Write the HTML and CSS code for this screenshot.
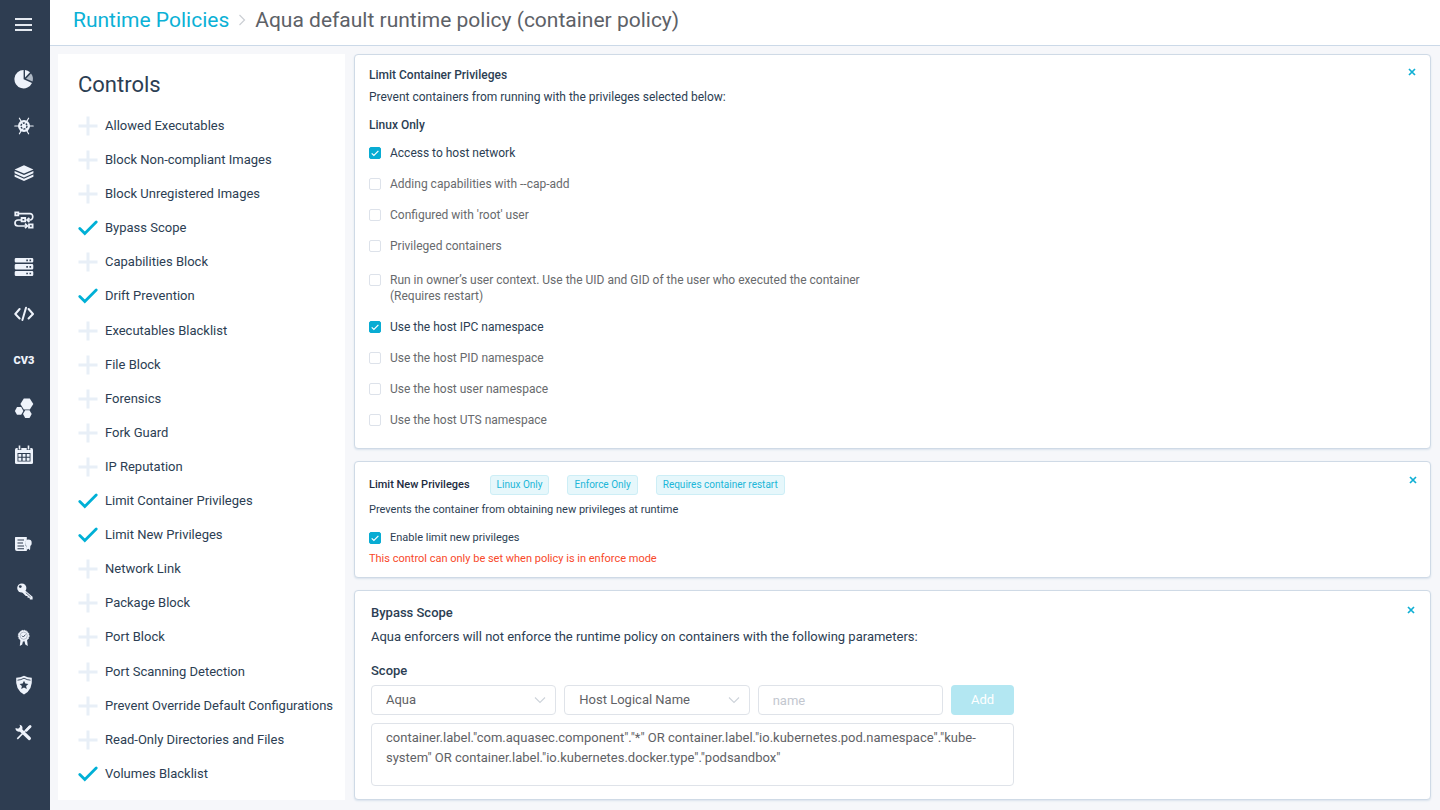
FILE: index.html
```html
<!DOCTYPE html>
<html lang="en">
<head>
<meta charset="utf-8">
<meta name="viewport" content="width=device-width, initial-scale=1">
<title>Runtime Policies</title>
<link rel="stylesheet" href="styles.css">
</head>
<body>
<svg class="defs" aria-hidden="true">
  <symbol id="plus" viewBox="0 0 20 20"><path d="M8.5 0.5h3v8h8v3h-8v8h-3v-8h-8v-3h8z" fill="#e8eff7"/></symbol>
  <symbol id="check" viewBox="0 0 20 20"><path d="M1.8 10.4l5 5L18.2 4" fill="none" stroke="#00b0d6" stroke-width="2.8" stroke-linecap="round"/></symbol>
  <symbol id="cross" viewBox="0 0 8 8"><path d="M1 1l6 6M7 1L1 7" fill="none" stroke="#0fafd4" stroke-width="1.7"/></symbol>
  <symbol id="chevron" viewBox="0 0 12 8"><path d="M1 1.5l5 5 5-5" fill="none" stroke="#cdd3da" stroke-width="1.1"/></symbol>
</svg>
<div class="app">
  <nav class="sidebar" aria-label="Main">
    <button class="nav-item menu" type="button" aria-label="Menu"><svg viewBox="0 0 20 20"><path d="M1 4h17M1 10h17M1 15h17" stroke="#e4e9f0" stroke-width="1.8"/></svg></button>
    <a class="nav-item" href="#" aria-label="Dashboard"><svg viewBox="0 0 20 20"><path d="M9.6 1A9.2 9.2 0 1 0 18 14L9.6 10.2z" fill="#eef3fb"/><path d="M11 .9a9 9 0 0 1 5 2.4L11 8.6z" fill="#eef3fb"/><path d="M17 4.5a9 9 0 0 1 1.6 8L12 9.7z" fill="#aeb8c4"/></svg></a>
    <a class="nav-item" href="#" aria-label="Workloads"><svg viewBox="0 0 20 20"><path d="M.8 10h18.400M5.400 2.200l9.200 15.600M14.600 2.200L5.400 17.800" stroke="#eef3fb" stroke-width="1.200" stroke-linecap="round"/><circle cx="10" cy="10" r="6" fill="#eef3fb"/><circle cx="10" cy="10" r="3" fill="none" stroke="#2e3d51" stroke-width="1.400" stroke-dasharray="2 1.140"/></svg></a>
    <a class="nav-item" href="#" aria-label="Images"><svg viewBox="0 0 20 20" fill="#eef3fb"><path d="M10 2.2l9.4 4.200L10 10.600.6 6.400z"/><path d="M.6 7.900L10 12.100l9.400-4.200v2.300L10 14.400.6 10.200z"/><path d="M.6 11.600L10 15.800l9.400-4.200v2.200L10 18 .6 13.800z"/></svg></a>
    <a class="nav-item" href="#" aria-label="Policies"><svg viewBox="0 0 20 20" fill="none" stroke="#eef3fb" stroke-width="1.7"><path d="M1.3 2.3h3v3h-3zM7.6 8h3.600v3.400H7.600zM15 14.400h3.600v3.200H15z" stroke-width="1.800"/><path d="M5 3.600h11a2.700 2.700 0 0 1 2.700 2.700v1a2.700 2.700 0 0 1-2.700 2.700h-3M7 10H4a3 3 0 0 0-3 3 3 3 0 0 0 3 3h9"/><path d="M15.400 7.800L13 10l2.400 2.200M11 13.700l2.400 2.300-2.400 2.200"/></svg></a>
    <a class="nav-item" href="#" aria-label="Hosts"><svg viewBox="0 0 20 20"><path d="M2 1h16q1.300 0 1.300 1.300v2q0 1.300-1.300 1.300H2Q.7 5.600.7 4.300v-2Q.7 1 2 1zM2 7.100h16q1.300 0 1.300 1.300v2.800q0 1.300-1.300 1.300H2Q.7 12.500.7 11.200V8.400Q.7 7.100 2 7.100zM2 14h16q1.300 0 1.300 1.300v2.400q0 1.300-1.300 1.300H2Q.7 19 .7 17.700v-2.400Q.7 14 2 14z" fill="#eef3fb"/><path d="M12.300 3.300h1.600M15.500 3.300h1.600M12.300 9.800h1.600M15.500 9.800h1.600M12.300 16.500h1.600M15.500 16.500h1.600" stroke="#2e3d51" stroke-width="1.700"/></svg></a>
    <a class="nav-item" href="#" aria-label="Functions"><svg viewBox="0 0 20 20" fill="none" stroke="#eef3fb" stroke-width="2" stroke-linecap="round" stroke-linejoin="round"><path d="M5.600 5L1.300 10l4.300 4.500M14.600 5L19 10l-4.400 4.500M12 3.800L8.400 16"/></svg></a>
    <a class="nav-item cve" href="#" aria-label="Vulnerabilities">CV3</a>
    <a class="nav-item" href="#" aria-label="Clusters"><svg viewBox="0 0 20 20" fill="#eef3fb"><path d="M9.800.600h6l3.500 5.500-3.500 5.500h-6L6.400 6.100z"/><path d="M3 9.100h4.200L9.400 13l-2.200 3.800H3L.9 13z"/><path d="M11.200 12.300h4.300l2.200 3.800-2.200 3.800h-4.300L9 16.100z"/></svg></a>
    <a class="nav-item" href="#" aria-label="Audit"><svg viewBox="0 0 20 20"><path d="M2.500 3h15q1.500 0 1.500 1.500v13q0 1.500-1.500 1.500h-15Q1 19 1 17.500v-13Q1 3 2.500 3z" fill="#eef3fb"/><path d="M5.500 1v4M14.500 1v4" stroke="#2e3d51" stroke-width="3.600"/><path d="M5.500.5v4M14.500.5v4" stroke="#eef3fb" stroke-width="1.600"/><path d="M3.500 8h13v8.500h-13z" fill="#2e3d51"/><path d="M4.400 8.900h2.900v2.900H4.400zM8.600 8.900h2.900v2.900H8.600zM12.700 8.900h2.900v2.900h-2.900zM4.400 12.800h2.900v2.900H4.400zM8.600 12.800h2.900v2.900H8.600zM12.700 12.800h2.900v2.900h-2.900z" fill="#eef3fb"/></svg></a>
    <a class="nav-item section" href="#" aria-label="Compliance"><svg viewBox="0 0 20 20"><path d="M1.500 3h11.300v3a4.500 4.500 0 0 0 0 7V17H3q-2 0-2-2V3.500z" fill="#eef3fb"/><path d="M3.500 6h6.500M3.500 9h5.500M3.500 12h6.500M3.500 14.800h6.500" stroke="#2e3d51" stroke-width="1.100"/><circle cx="14.400" cy="8.900" r="3.300" fill="#eef3fb"/><path d="M12.500 11.500l-.3 4.700 2.200-1.500 1.600 1.500.4-4.700z" fill="#eef3fb"/></svg></a>
    <a class="nav-item" href="#" aria-label="Secrets"><svg viewBox="0 0 20 20"><path d="M10 8.500l8.600 7.300v2.700h-2.700l-.4-1.800h-1.900l-.2-1.800h-1.600L7.600 10.800z" fill="#eef3fb"/><circle cx="7.800" cy="7" r="4.600" fill="#eef3fb"/><circle cx="6.300" cy="5.600" r="1.400" fill="#2e3d51"/><path d="M11.800 11.700l4.800 4.200" stroke="#2e3d51" stroke-width=".7"/></svg></a>
    <a class="nav-item" href="#" aria-label="Certificates"><svg viewBox="0 0 20 20"><path d="M6.500 11.500L5.800 18l2.400-1.400L9.300 12zM13 11.500l.8 6.500-2.500-1.400L10.200 12z" fill="#eef3fb"/><circle cx="9.700" cy="7.700" r="5.400" fill="#eef3fb" stroke="#eef3fb" stroke-width="1" stroke-dasharray="1.500 1"/><circle cx="9.700" cy="7.700" r="3.600" fill="none" stroke="#9aa4b1" stroke-width=".7"/><path d="M8 7.700l1.300 1.300 2.200-2.400" fill="none" stroke="#2e3d51" stroke-width=".9"/></svg></a>
    <a class="nav-item" href="#" aria-label="Security"><svg viewBox="0 0 20 20"><path d="M10 .8q3.500 2 7.800 2Q19 15 10 19.400 1 15 2.200 2.800 6.500 2.800 10 .8z" fill="#eef3fb"/><path d="M3.500 5.200Q7 5 10 3.200q3 1.800 6.500 2" fill="none" stroke="#2e3d51" stroke-width=".9"/><path d="M10 5.800l1.300 2.800 3.100.3-2.300 2.100.7 3.100-2.800-1.600-2.800 1.600.7-3.100-2.300-2.100 3.100-.3z" fill="#2e3d51"/></svg></a>
    <a class="nav-item" href="#" aria-label="Settings"><svg viewBox="0 0 20 20"><path d="M3.300 16.900L15.500 4.500" stroke="#eef3fb" stroke-width="1.500"/><path d="M10.800 8.300l4.300-4.800q1-1 2 0t0 2l-4.500 4.600z" fill="#eef3fb"/><path d="M6 7.500l9.400 9" stroke="#eef3fb" stroke-width="3.200" stroke-linecap="round"/><path d="M5.600 2.700A3.500 3.500 0 1 1 1.500 6l2.700.8 1.900-1.900z" fill="#eef3fb"/></svg></a>
  </nav>
  <div class="page">
    <header class="topbar">
      <a href="#">Runtime Policies</a>
      <svg class="crumb" viewBox="0 0 8 12" aria-hidden="true"><path d="M1.500 1l5 5-5 5" fill="none" stroke="#cbcfd4" stroke-width="1.200"/></svg>
      <h1>Aqua default runtime policy (container policy)</h1>
    </header>
    <main class="content">
      <aside class="controls">
        <h2>Controls</h2>
        <ul>
          <li><button type="button"><svg><use href="#plus"/></svg>Allowed Executables</button></li>
          <li><button type="button"><svg><use href="#plus"/></svg>Block Non-compliant Images</button></li>
          <li><button type="button"><svg><use href="#plus"/></svg>Block Unregistered Images</button></li>
          <li><button type="button"><svg><use href="#check"/></svg>Bypass Scope</button></li>
          <li><button type="button"><svg><use href="#plus"/></svg>Capabilities Block</button></li>
          <li><button type="button"><svg><use href="#check"/></svg>Drift Prevention</button></li>
          <li><button type="button"><svg><use href="#plus"/></svg>Executables Blacklist</button></li>
          <li><button type="button"><svg><use href="#plus"/></svg>File Block</button></li>
          <li><button type="button"><svg><use href="#plus"/></svg>Forensics</button></li>
          <li><button type="button"><svg><use href="#plus"/></svg>Fork Guard</button></li>
          <li><button type="button"><svg><use href="#plus"/></svg>IP Reputation</button></li>
          <li><button type="button"><svg><use href="#check"/></svg>Limit Container Privileges</button></li>
          <li><button type="button"><svg><use href="#check"/></svg>Limit New Privileges</button></li>
          <li><button type="button"><svg><use href="#plus"/></svg>Network Link</button></li>
          <li><button type="button"><svg><use href="#plus"/></svg>Package Block</button></li>
          <li><button type="button"><svg><use href="#plus"/></svg>Port Block</button></li>
          <li><button type="button"><svg><use href="#plus"/></svg>Port Scanning Detection</button></li>
          <li><button type="button"><svg><use href="#plus"/></svg>Prevent Override Default Configurations</button></li>
          <li><button type="button"><svg><use href="#plus"/></svg>Read-Only Directories and Files</button></li>
          <li><button type="button"><svg><use href="#check"/></svg>Volumes Blacklist</button></li>
        </ul>
      </aside>
      <div class="cards">
        <section class="card privileges">
          <header><h3>Limit Container Privileges</h3><button class="close" type="button" aria-label="Remove Limit Container Privileges"><svg><use href="#cross"/></svg></button></header>
          <p>Prevent containers from running with the privileges selected below:</p>
          <fieldset>
            <legend>Linux Only</legend>
            <label><input type="checkbox" checked><span>Access to host network</span></label>
            <label><input type="checkbox"><span>Adding capabilities with --cap-add</span></label>
            <label><input type="checkbox"><span>Configured with 'root' user</span></label>
            <label><input type="checkbox"><span>Privileged containers</span></label>
            <label class="tall"><input type="checkbox"><span>Run in owner’s user context. Use the UID and GID of the user who executed the container (Requires restart)</span></label>
            <label><input type="checkbox" checked><span>Use the host IPC namespace</span></label>
            <label><input type="checkbox"><span>Use the host PID namespace</span></label>
            <label><input type="checkbox"><span>Use the host user namespace</span></label>
            <label><input type="checkbox"><span>Use the host UTS namespace</span></label>
          </fieldset>
        </section>
        <section class="card new-privileges">
          <header><h3>Limit New Privileges</h3><span class="tag">Linux Only</span><span class="tag">Enforce Only</span><span class="tag">Requires container restart</span><button class="close" type="button" aria-label="Remove Limit New Privileges"><svg><use href="#cross"/></svg></button></header>
          <p>Prevents the container from obtaining new privileges at runtime</p>
          <label><input type="checkbox" checked><span>Enable limit new privileges</span></label>
          <p class="warning">This control can only be set when policy is in enforce mode</p>
        </section>
        <section class="card bypass">
          <header><h3>Bypass Scope</h3><button class="close" type="button" aria-label="Remove Bypass Scope"><svg><use href="#cross"/></svg></button></header>
          <p>Aqua enforcers will not enforce the runtime policy on containers with the following parameters:</p>
          <h4 id="scope">Scope</h4>
          <form class="scope-form" aria-labelledby="scope">
            <div class="select"><select aria-label="Category"><option>Aqua</option></select><svg><use href="#chevron"/></svg></div>
            <div class="select"><select aria-label="Attribute"><option>Host Logical Name</option></select><svg><use href="#chevron"/></svg></div>
            <input type="text" placeholder="name" aria-label="Name">
            <button class="add" type="button">Add</button>
            <textarea aria-label="Scope expression" spellcheck="false">container.label."com.aquasec.component"."*" OR container.label."io.kubernetes.pod.namespace"."kube-system" OR container.label."io.kubernetes.docker.type"."podsandbox"</textarea>
          </form>
        </section>
      </div>
    </main>
  </div>
</div>
</body>
</html>
```
FILE: styles.css
```css
* { box-sizing: border-box; }
body {
  margin: 0;
  background: #f6f7fa;
  color: #2c3e53;
  font: 13px/16px Roboto, "Liberation Sans", sans-serif;
}
h1, h2, h3, h4, p, ul, fieldset { margin: 0; padding: 0; border: 0; }
button, input, select, textarea { font: inherit; color: inherit; }
button { padding: 0; border: 0; background: none; }
a { color: #0bb1d6; text-decoration: none; }
svg { display: block; flex: none; }
.defs { position: absolute; width: 0; height: 0; }

.app { display: flex; min-height: 100vh; }

.sidebar {
  flex: none;
  display: flex;
  flex-direction: column;
  align-items: center;
  gap: 27px;
  width: 50px;
  padding: 15px 3px 0 0;
  background: #2e3d51;
}
.nav-item { display: grid; place-items: center; width: 20px; height: 20px; color: #eef3fb; }
.nav-item svg { width: 20px; height: 20px; }
.menu { margin-bottom: 7px; }
.section { margin-top: 42px; }
.cve { font-size: 11px; font-weight: 900; }

.page { flex: 1; display: flex; flex-direction: column; min-width: 0; }
.topbar {
  display: flex;
  align-items: center;
  height: 46px;
  padding: 0 23px 6px;
  border-bottom: 1px solid #cbd9e8;
  background: #fff;
  font-size: 21px;
  line-height: 28px;
}
.topbar h1 { font-size: 21px; font-weight: 400; color: #5d6167; }
.crumb { width: 8px; height: 12px; margin: 0 9px; }

.content { flex: 1; display: flex; gap: 9px; padding: 8px 9px 10px 8px; }
.controls {
  flex: none;
  display: flex;
  flex-direction: column;
  width: 287px;
  padding: 16px 16px 16px 20px;
  background: #fff;
}
.controls h2 { font-size: 22px; line-height: 30px; font-weight: 400; }
.controls ul {
  flex: 1;
  display: flex;
  flex-direction: column;
  justify-content: space-between;
  padding-top: 16px;
  list-style: none;
}
.controls button { display: flex; align-items: center; gap: 7px; height: 20px; white-space: nowrap; }
.controls svg { width: 20px; height: 20px; }

.cards { flex: 1; display: flex; flex-direction: column; gap: 12px; min-width: 0; }
.card {
  border: 1px solid #cfdae6;
  border-radius: 4px;
  background: #fff;
  box-shadow: 0 1px 2px #d9e2ec;
}
.card header { display: flex; align-items: center; }
.card h3, .card h4, legend { font-size: inherit; font-weight: 500; }
.close { align-self: flex-start; margin-left: auto; padding-top: 1px; }
.close svg { width: 8px; height: 8px; }
legend { padding: 0; }

label { display: flex; align-items: flex-start; gap: 9px; width: fit-content; }
input[type="checkbox"] {
  appearance: none;
  flex: none;
  width: 12px;
  height: 12px;
  margin: 2px 0;
  border: 1px solid #dde2ea;
  border-radius: 2px;
  background: #fff;
}
input[type="checkbox"]:checked {
  border-color: #08acd3;
  background: #08acd3 url("data:image/svg+xml,%3Csvg xmlns='http://www.w3.org/2000/svg' viewBox='0 0 10 10'%3E%3Cpath d='M1.700 5.300l2.200 2.200L8.400 2.900' fill='none' stroke='white' stroke-width='1.200'/%3E%3C/svg%3E") center / 10px no-repeat;
}

.privileges { padding: 12px 14px 20px; font-size: 12px; }
.privileges p { margin-top: 6px; }
.privileges fieldset { margin-top: 12px; }
.privileges legend { margin-bottom: 12px; }
.privileges label { max-width: 520px; margin-bottom: 15px; color: #686a6d; }
.privileges label:last-child { margin-bottom: 0; }
.privileges label:has(:checked) { color: #2c3e53; }
.privileges .tall { padding-top: 3px; }

.new-privileges { padding: 13px 13px 10px 14px; font-size: 11px; }
.new-privileges h3 { margin-right: 20px; color: #1d2c3f; }
.tag {
  margin-right: 18px;
  padding: 1px 6px;
  border: 1px solid #cdeef6;
  border-radius: 3px;
  background: #e6f7fb;
  color: #20b6d8;
  font-size: 10px;
}
.new-privileges p { margin-top: 7px; }
.new-privileges label { margin-top: 12px; }
.new-privileges .warning { margin-top: 5px; color: #f8492a; }

.bypass { padding: 14px 15px 13px 16px; }
.bypass p { margin-top: 8px; }
.bypass h4 { margin: 18px 0 6px; }
.scope-form {
  display: grid;
  grid-template-columns: 1fr 1fr 1fr 63px;
  gap: 8px;
  max-width: 643px;
  color: #5f6266;
}
.select { position: relative; }
.select svg { position: absolute; top: 11px; right: 10px; width: 12px; height: 8px; pointer-events: none; }
select, input[type="text"], textarea {
  display: block;
  width: 100%;
  min-width: 0;
  height: 30px;
  padding: 0 14px;
  border: 1px solid #dfe3e9;
  border-radius: 4px;
  background: #fff;
  appearance: none;
}
::placeholder { color: #c3c7cf; opacity: 1; }
.add { border-radius: 4px; background: #b3e7f2; color: #fff; }
textarea { grid-column: 1 / -1; height: 63px; padding: 4px 14px; resize: none; line-height: 20px; }
```
